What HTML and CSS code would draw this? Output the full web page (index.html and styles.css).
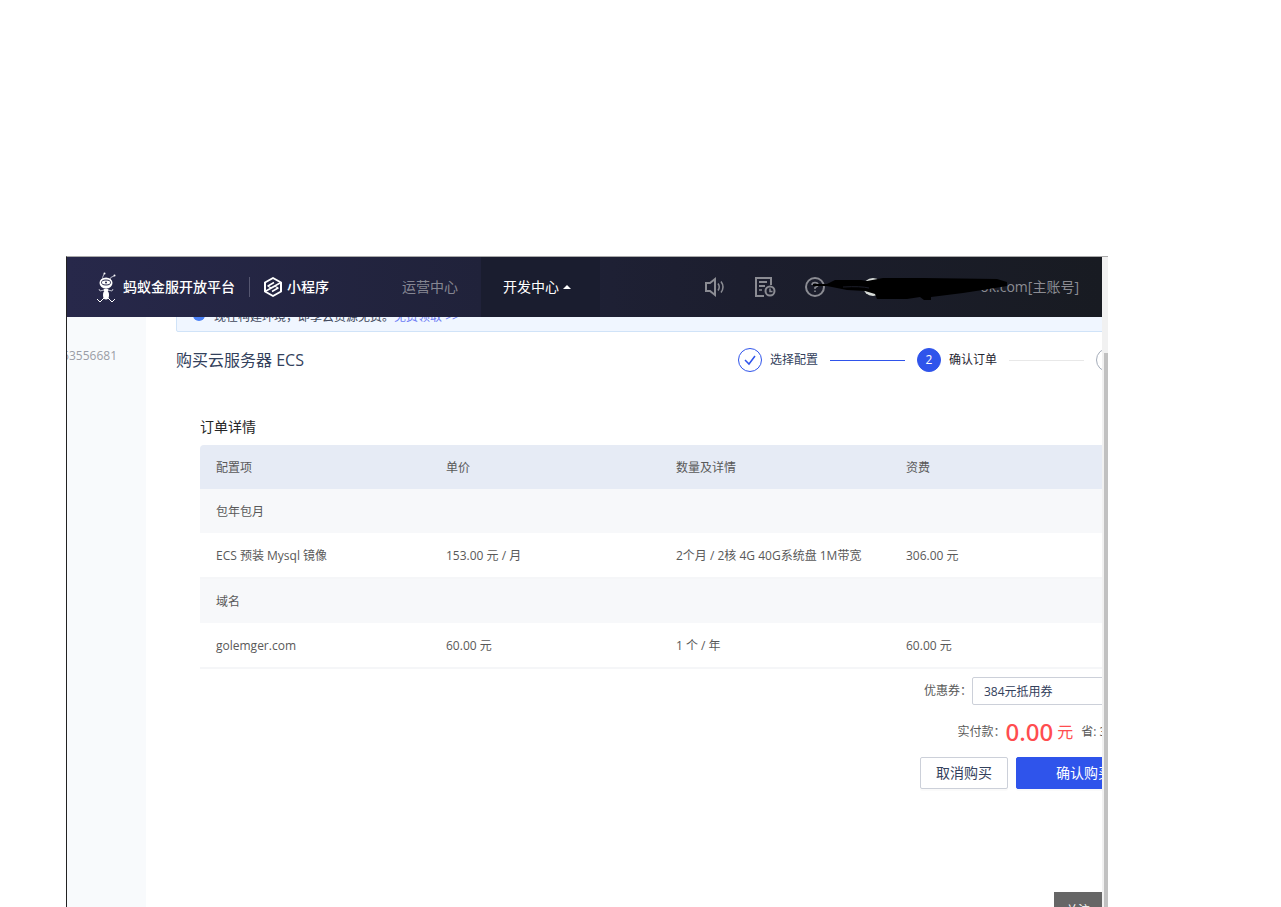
FILE: index.html
```html
<!DOCTYPE html>
<html lang="zh-CN">
<head>
  <meta charset="UTF-8" />
  <meta name="viewport" content="width=device-width, initial-scale=1" />
  <title>购买云服务器 ECS</title>
  <link rel="stylesheet" href="styles.css">
</head>
<body>

  <div class="window">
    <div class="view">

      <header class="topbar">
        <a class="brand" href="#">
          <svg class="ant" viewBox="0 0 22 32" width="22" height="32" fill="none" stroke="#fff">
            <path d="M7.500 10Q5.500 6 8 3M13 10Q14 5.500 18 5" stroke="#b9bac8" />
            <circle cx="8.500" cy="2.500" r="1" fill="#fff" stroke="none" />
            <circle cx="18.500" cy="4.500" r="1" fill="#fff" stroke="none" />
            <ellipse cx="10" cy="12" rx="6.500" ry="5.500" fill="#fff" stroke="none" />
            <ellipse cx="10" cy="11.500" rx="4.500" ry="2.500" stroke="#26274a" />
            <circle cx="10" cy="11.500" r="1" fill="#26274a" stroke="none" />
            <path d="M8 19L4 20L3 18M12 19L16 20L17 18" stroke="#b9bac8" />
            <ellipse cx="10" cy="19" rx="2.500" ry="1.500" fill="#fff" stroke="none" />
            <ellipse cx="10" cy="24" rx="3" ry="4.500" fill="#fff" stroke="none" />
            <path d="M8 27L4 31L1 28M12 27L16 31L19 28" />
          </svg>
          蚂蚁金服开放平台
        </a>
        <a class="product" href="#">
          <svg viewBox="0 0 20 20" width="20" height="20" fill="none" stroke="#fff" stroke-width="2" stroke-linejoin="round">
            <path d="M10 1L18 5.500V14.500L10 19L2 14.500V5.500Z" />
            <path d="M18 5.500L8 11L5 9L11 5.500M2 14.500L12 9L15 11L9 14.500" stroke-width="1.500" />
          </svg>
          小程序
        </a>
        <nav class="nav">
          <a class="nav-item" href="#">运营中心</a>
          <a class="nav-item active" href="#">开发中心<span class="caret"></span></a>
        </nav>
        <div class="tools">
          <button class="tool" aria-label="公告">
            <svg viewBox="0 0 22 22" width="22" height="22" fill="none" stroke="currentColor" stroke-width="2">
              <path d="M2 7H6L11 3V19L6 15H2Z" />
              <path d="M14 7.500Q16.500 11 14 14.500M17 5.500Q21 11 17 16.500" stroke-width="1.500" />
            </svg>
          </button>
          <button class="tool" aria-label="文档">
            <svg viewBox="0 0 22 22" width="22" height="22" fill="none" stroke="currentColor" stroke-width="2">
              <path d="M10 20H2V2H17V9M5 6H13M5 10H11" />
              <path d="M5 14H8" stroke-width="1.500" />
              <circle cx="16" cy="15" r="4.500" />
              <path d="M16 12.500V15.500H18.500" stroke-width="1.500" />
            </svg>
          </button>
          <button class="tool" aria-label="帮助">
            <svg viewBox="0 0 22 22" width="22" height="22" fill="none" stroke="currentColor" stroke-width="2">
              <circle cx="11" cy="11" r="9" />
              <path d="M8 9Q8 6.500 11 6.500T14 9Q14 10.500 11 11.500V13M11 14.500V16" stroke-width="1.500" />
            </svg>
          </button>
          <a class="account" href="#">ok.com[主账号]
            <svg class="scribble" viewBox="0 0 196 30" width="196" height="30">
              <ellipse cx="60" cy="14" rx="10" ry="9" fill="#d8dcd8" />
              <path d="M0 11H14L22 7H48L54 8L70 5H110L184 6L194 9V13L176 16L150 20L118 24V27H111L107 24L94 26H64L62 21L52 18L34 17L14 13H0Z" />
              <path d="M30 14Q48 13 56 15" stroke="#1c1e2a" fill="none" />
            </svg>
          </a>
        </div>
      </header>

      <div class="body">
        <aside class="side"><span>2018063556681</span></aside>

        <main class="main">
          <div class="content">
            <div class="notice">
              <span class="notice-icon"></span>
              <span>现在构建环境，即享云资源免费。<a href="#">免费领取 &gt;&gt;</a></span>
            </div>

            <div class="title-row">
              <h1>购买云服务器 ECS</h1>
              <ol class="steps">
                <li class="step done">
                  <span class="dot">
                    <svg viewBox="0 0 12 12" width="12" height="12" fill="none" stroke="currentColor" stroke-width="1.500"><path d="M1 6L5 10L11 2" /></svg>
                  </span>
                  选择配置
                </li>
                <li class="step current"><span class="dot">2</span>确认订单</li>
                <li class="step"><span class="dot">3</span>支付完成</li>
              </ol>
            </div>

            <section class="order">
              <h2>订单详情</h2>
              <table class="items">
                <thead>
                  <tr><th>配置项</th><th>单价</th><th>数量及详情</th><th>资费</th></tr>
                </thead>
                <tbody>
                  <tr class="group"><td colspan="4">包年包月</td></tr>
                  <tr><td>ECS 预装 Mysql 镜像</td><td>153.00 元 / 月</td><td>2个月 / 2核 4G 40G系统盘 1M带宽</td><td>306.00 元</td></tr>
                  <tr class="group divided"><td colspan="4">域名</td></tr>
                  <tr><td>golemger.com</td><td>60.00 元</td><td>1 个 / 年</td><td>60.00 元</td></tr>
                </tbody>
              </table>

              <div class="pay">
                <div class="pay-row">
                  <label for="coupon">优惠券：</label>
                  <select class="coupon" id="coupon"><option>384元抵用券</option></select>
                </div>
                <div class="pay-row total">
                  <span>实付款：</span>
                  <strong>0.00</strong><span class="unit">元</span>
                  <span class="saved">省: 366.00 元</span>
                </div>
                <div class="pay-row">
                  <button class="btn">取消购买</button>
                  <button class="btn primary">确认购买</button>
                </div>
              </div>
            </section>
          </div>
          <button class="float-btn">关注</button>
        </main>
      </div>
    </div>

    <div class="scrollbar"><div class="thumb"></div></div>
  </div>

</body>
</html>
```

FILE: styles.css
```css
* {
  box-sizing: border-box;
}

body {
  margin: 0;
  height: 100vh;
  padding: 256px 173px 0 66px;
  display: flex;
  overflow: hidden;
  background: #fff;
  color: #595959;
  font-family: "Open Sans", "Noto Sans CJK SC", sans-serif;
  font-size: 12px;
  line-height: 20px;
}

a {
  color: inherit;
  text-decoration: none;
}

button,
select {
  font: inherit;
}

.window {
  flex: 1;
  min-width: 0;
  display: flex;
  border-top: 1px solid #aaa;
  border-left: 1px solid #222;
}

.view {
  flex: 1;
  min-width: 0;
  display: flex;
  flex-direction: column;
  overflow: hidden;
}

/* top bar */

.topbar {
  flex: none;
  display: flex;
  align-items: center;
  height: 60px;
  padding: 0 23px 0 29px;
  background: linear-gradient(to right, #27284a, #20223a 40%, #1c1e2e 65%, #181b22);
  color: #fff;
  font-size: 14px;
  white-space: nowrap;
}

.brand,
.product {
  display: flex;
  align-items: center;
  font-weight: 500;
}

.brand {
  gap: 5px;
  padding-right: 14px;
}

.product {
  gap: 4px;
  padding-left: 13px;
  border-left: 1px solid #555670;
}

.nav {
  display: flex;
  align-self: stretch;
  margin-left: 51px;
}

.nav-item {
  display: flex;
  align-items: center;
  gap: 4px;
  padding: 0 23px 0 22px;
  color: #858692;
}

.nav-item.active {
  padding-right: 29px;
  background: #1a1d2f;
  color: #fff;
}

.caret {
  border: 4px solid transparent;
  border-top: 0;
  border-bottom-color: #fff;
}

.tools {
  display: flex;
  align-items: center;
  gap: 28px;
  margin-left: auto;
  color: #8b8c93;
}

.tool {
  display: flex;
  padding: 0;
  border: 0;
  background: none;
  color: inherit;
}

.account {
  position: relative;
  padding-left: 126px;
}

.scribble {
  position: absolute;
  left: -41px;
  top: -4px;
}

/* page */

.body {
  flex: 1;
  min-height: 0;
  display: flex;
}

.side {
  flex: none;
  display: flex;
  justify-content: flex-end;
  width: 79px;
  padding: 29px 29px 0 0;
  overflow: hidden;
  background: #f8fafc;
  color: #9a9da6;
}

.main {
  position: relative;
  flex: 1;
  min-width: 0;
  padding-left: 30px;
  overflow: hidden;
}

.content {
  min-width: 1000px;
}

.notice {
  display: flex;
  align-items: center;
  gap: 9px;
  height: 30px;
  margin-top: -15px;
  padding-left: 16px;
  border: 1px solid #d0e3f8;
  border-radius: 2px;
  background: #f0f6ff;
  color: #40485b;
}

.notice a {
  color: #6c7cf5;
}

.notice-icon {
  width: 12px;
  height: 12px;
  margin-bottom: 4px;
  border-radius: 50%;
  background: #4a80f5;
}

.title-row {
  display: flex;
  align-items: center;
  justify-content: space-between;
  padding-top: 16px;
}

h1,
h2 {
  margin: 0;
  font-weight: 400;
}

h1 {
  color: #33415c;
  font-size: 16px;
  line-height: 24px;
}

.steps {
  display: flex;
  gap: 12px;
  margin: 0;
  padding: 0;
  list-style: none;
  color: #33415c;
}

.step {
  display: flex;
  align-items: center;
  gap: 8px;
}

.step:not(:last-child)::after {
  content: "";
  width: 75px;
  height: 1px;
  margin-left: 4px;
  background: #e8e8e8;
}

.step.done::after {
  background: #2f54eb;
}

.step.current {
  color: #1f2430;
}

.dot {
  display: flex;
  align-items: center;
  justify-content: center;
  width: 24px;
  height: 24px;
  border: 1px solid #a5adba;
  border-radius: 50%;
}

.step.done .dot {
  border-color: #2f54eb;
  color: #2f54eb;
}

.step.current .dot {
  border-color: #2f54eb;
  background: #2f54eb;
  color: #fff;
}

/* order */

.order {
  padding: 45px 24px 0;
}

h2 {
  color: #262626;
  font-size: 14px;
  line-height: 20px;
}

.items {
  width: 100%;
  margin-top: 8px;
  border-collapse: separate;
  border-spacing: 0;
  border-bottom: 2px solid #f5f6f8;
  table-layout: fixed;
}

.items th,
.items td {
  height: 44px;
  padding: 2px 16px 0;
  font-weight: 400;
  text-align: left;
}

.items th {
  background: #e6ebf5;
}

.items th:first-child {
  border-top-left-radius: 4px;
}

.items th:not(:last-child) {
  width: 230px;
}

.group td {
  background: #f7f8fa;
}

.divided td {
  height: 46px;
  border-top: 2px solid #f5f6f8;
}

.pay {
  display: flex;
  flex-direction: column;
  align-items: flex-end;
  gap: 12px;
  padding-top: 8px;
}

.pay-row {
  display: flex;
  align-items: center;
}

.coupon {
  width: 180px;
  height: 28px;
  padding: 0 7px;
  border: 1px solid #ccd0d9;
  border-radius: 2px;
  background: #fff;
  color: #33415c;
}

.total {
  height: 28px;
  padding-top: 2px;
}

.total strong {
  margin-right: 4px;
  color: #ff4d4f;
  font-family: "Noto Sans", sans-serif;
  font-size: 24px;
  font-weight: 500;
}

.unit {
  margin-right: 8px;
  color: #ff4d4f;
  font-size: 16px;
}

.btn {
  height: 32px;
  padding: 0 15px;
  border: 1px solid #ccd0d9;
  border-radius: 2px;
  background: #fff;
  box-shadow: 0 2px 0 rgba(0, 0, 0, 0.02);
  color: #33415c;
  font-size: 14px;
}

.btn.primary {
  margin-left: 8px;
  padding: 0 39px;
  border-color: #2f54eb;
  background: #2f54eb;
  color: #fff;
}

.float-btn {
  position: absolute;
  right: 0;
  bottom: -23px;
  width: 48px;
  height: 38px;
  border: 0;
  background: #666;
  color: #fff;
}

/* scrollbar */

.scrollbar {
  flex: none;
  width: 6px;
  padding: 96px 0 0 2px;
  background: #f1f1f1;
}

.thumb {
  height: 100%;
  background: #c1c1c1;
}
```
